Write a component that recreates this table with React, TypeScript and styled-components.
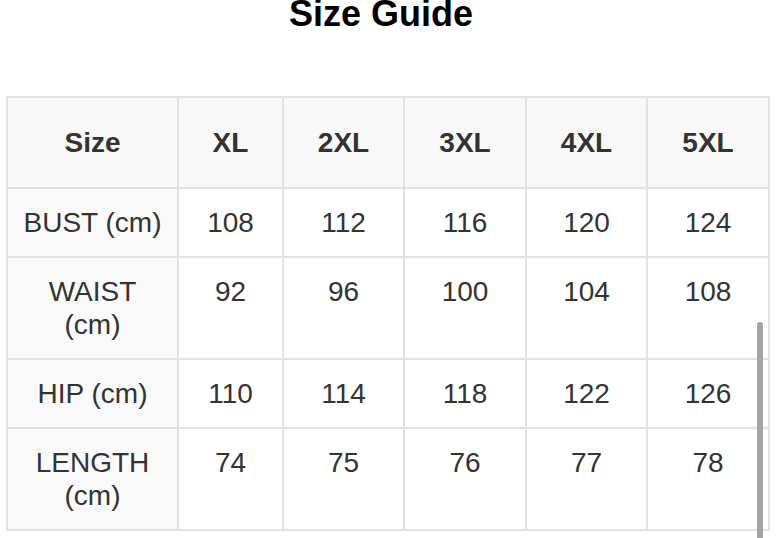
import React from 'react'
import styled, { createGlobalStyle } from 'styled-components'

const GlobalStyle = createGlobalStyle`
  html, body {
    margin: 0;
    padding: 0;
    background: #ffffff;
    overflow: hidden;
  }
  body {
    font-family: "Liberation Sans", Arial, Helvetica, sans-serif;
    color: #333333;
  }
`

const Page = styled.div`
  position: relative;
  width: 780px;
  height: 538px;
  overflow: hidden;
`

const Title = styled.h1`
  width: 762px;
  margin: -4px 0 64px 0;
  font-size: 36px;
  line-height: 36px;
  font-weight: 700;
  color: #000000;
  text-align: center;
`

const Table = styled.table`
  margin-left: 6px;
  width: 764px;
  table-layout: fixed;
  border-collapse: separate;
  border-spacing: 0;
  border-top: 2px solid #dfe2e7;
  border-left: 2px solid #dfe2e7;
`

const Col = styled.col<{ $w: number }>`
  width: ${({ $w }) => $w}px;
`

const HeadCell = styled.th`
  padding: 28px 10px;
  font-size: 28px;
  line-height: 33px;
  font-weight: 700;
  color: #333333;
  text-align: center;
  vertical-align: middle;
  background: #f8f8f8;
  border-right: 2px solid #dfe2e7;
  border-bottom: 2px solid #dfe2e7;
`

const Cell = styled.td<{ $label?: boolean }>`
  padding: 17px 10px;
  font-size: 28px;
  line-height: 33px;
  font-weight: 400;
  color: #333333;
  text-align: center;
  vertical-align: top;
  background: ${({ $label }) => ($label ? '#f9f9f9' : '#ffffff')};
  border-right: 2px solid #dfe2e7;
  border-bottom: 2px solid #dfe2e7;
`

const ScrollThumb = styled.div`
  position: absolute;
  left: 757px;
  top: 322px;
  width: 6px;
  height: 230px;
  border-radius: 3px;
  background: #a4a4a4;
`

const sizes = ['XL', '2XL', '3XL', '4XL', '5XL']
const widths = [171, 105, 121, 122, 121, 122]

const rows = [
  { label: 'BUST (cm)', values: [108, 112, 116, 120, 124] },
  { label: 'WAIST (cm)', values: [92, 96, 100, 104, 108] },
  { label: 'HIP (cm)', values: [110, 114, 118, 122, 126] },
  { label: 'LENGTH (cm)', values: [74, 75, 76, 77, 78] },
]

export default function App() {
  return (
    <Page>
      <GlobalStyle />
      <Title>Size Guide</Title>
      <Table>
        <colgroup>
          {widths.map((w, i) => (
            <Col key={i} $w={w} />
          ))}
        </colgroup>
        <thead>
          <tr>
            <HeadCell>Size</HeadCell>
            {sizes.map((s) => (
              <HeadCell key={s}>{s}</HeadCell>
            ))}
          </tr>
        </thead>
        <tbody>
          {rows.map((row) => (
            <tr key={row.label}>
              <Cell $label>{row.label}</Cell>
              {row.values.map((v, i) => (
                <Cell key={i}>{v}</Cell>
              ))}
            </tr>
          ))}
        </tbody>
      </Table>
      <ScrollThumb />
    </Page>
  )
}
